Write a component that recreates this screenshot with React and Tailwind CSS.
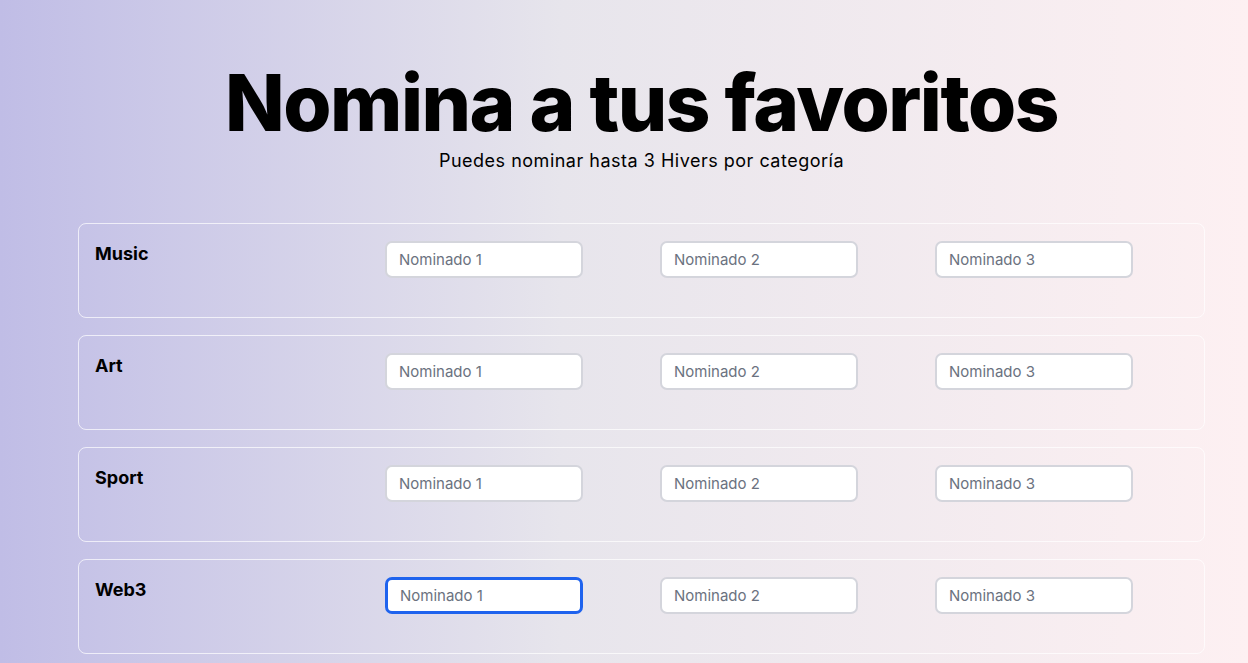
import React from "react";

const cats = ["Music", "Art", "Sport", "Web3"];

export default function App() {
  return (
    <div
      className="min-h-[663px] w-full bg-[linear-gradient(90deg,#c0bde6_0%,#e7e5ec_45%,#fdf0f2_100%)] text-black"
      style={{ fontFamily: "Inter, 'Noto Sans', sans-serif" }}
    >
      <div className="ml-[78px] w-[1127px] pt-[58px]">
        <h1 className="text-center text-[78px] font-extrabold leading-[90px] tracking-[-1.5px]">
          Nomina a tus favoritos
        </h1>
        <p className="mt-[1px] text-center text-[18px] leading-[24px] tracking-[0.5px]">
          Puedes nominar hasta 3 Hivers por categoría
        </p>
        <div className="mt-[50px] flex flex-col gap-[17px]">
          {cats.map((c, i) => (
            <div
              key={c}
              className="flex h-[95px] items-start rounded-[8px] border border-white/70 px-[16px] pt-[17px]"
            >
              <div className="mt-[1px] w-[290px] text-[18px] font-bold leading-[24px]">
                {c}
              </div>
              <div className="flex gap-[77px]">
                {[1, 2, 3].map((n) => (
                  <input
                    key={n}
                    placeholder={`Nominado ${n}`}
                    className={
                      "h-[37px] w-[198px] rounded-[7px] bg-white px-[12px] text-[15px] outline-none placeholder:text-[#6b7280] " +
                      (i === 3 && n === 1
                        ? "border-[3px] border-[#1f63ee] px-[11px]"
                        : "border-2 border-[#d4d5dc]")
                    }
                  />
                ))}
              </div>
            </div>
          ))}
        </div>
      </div>
    </div>
  );
}
